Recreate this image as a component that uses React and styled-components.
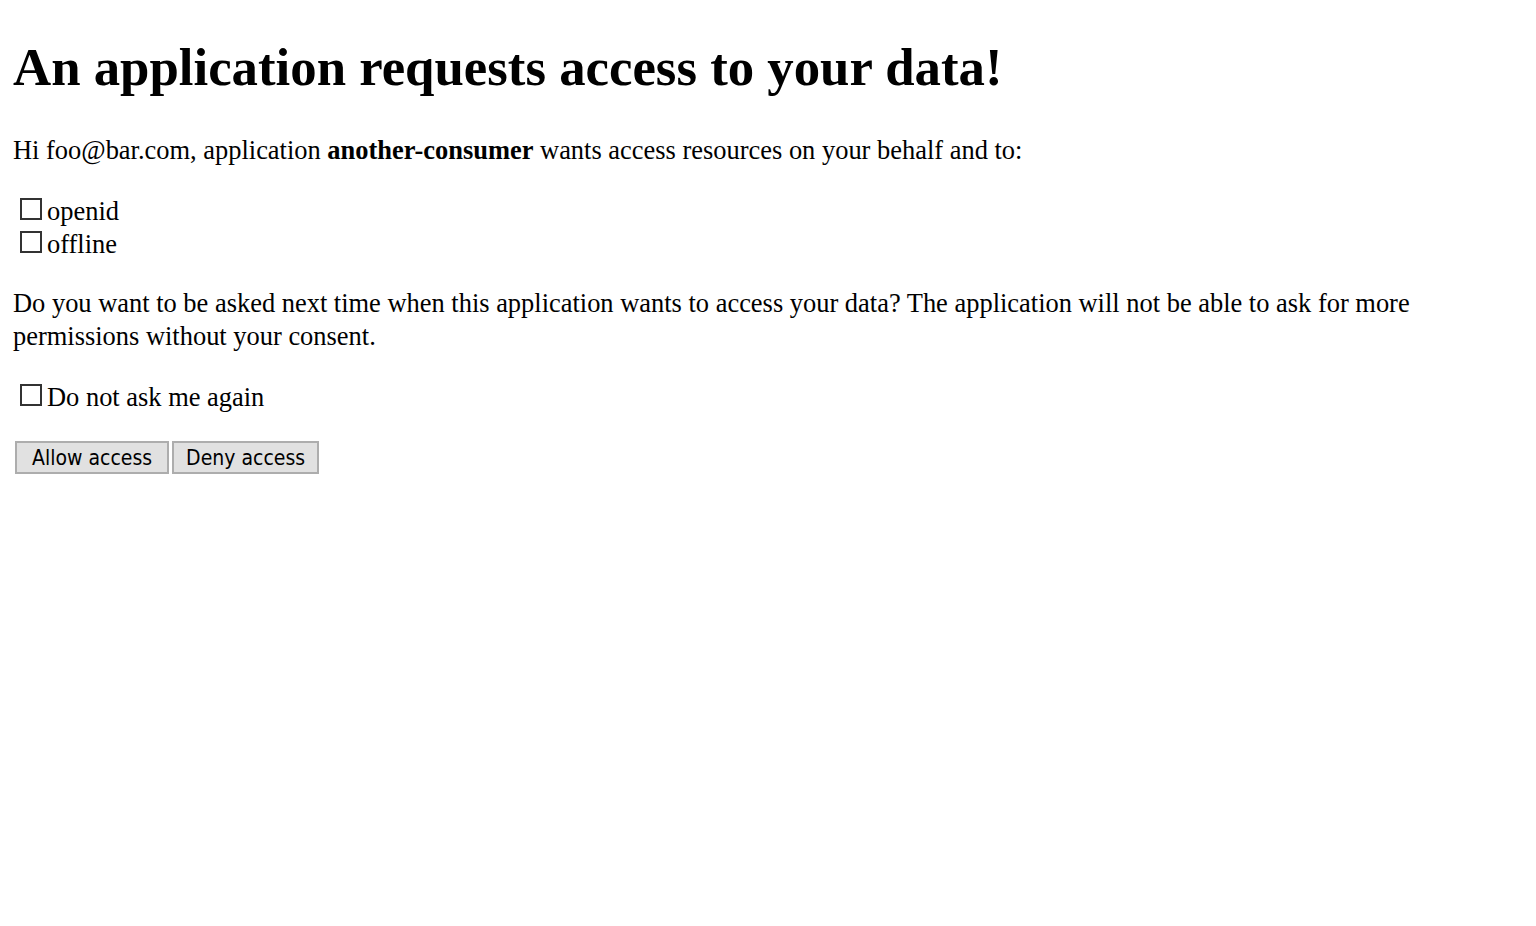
import React, { useState } from 'react';
import styled, { createGlobalStyle } from 'styled-components';

const GlobalStyle = createGlobalStyle`
  body {
    margin: 0;
    background: #fff;
    color: #000;
    font-family: "Liberation Serif", "Times New Roman", serif;
  }
`;

// Page wrapper
const Page = styled.div`
  padding: 0 13px;
`;

const Title = styled.h1`
  font-size: 52.8px;
  line-height: 63px;
  font-weight: bold;
  margin: 36px 0 35px;
`;

const Text = styled.p`
  font-size: 26.45px;
  line-height: 33px;
  margin: ${({ spacing }) => spacing || '0'};
`;

// Scope checkboxes
const ScopeList = styled.div`
  display: flex;
  flex-direction: column;
  margin: ${({ spacing }) => spacing || '0'};
`;

const CheckRow = styled.label`
  display: flex;
  align-items: baseline;
  font-size: 26.45px;
  line-height: 33px;
`;

const Box = styled.input`
  appearance: none;
  -webkit-appearance: none;
  box-sizing: border-box;
  width: 22px;
  height: 22px;
  margin: 0 5px 0 7px;
  border: 2px solid #333;
  background: #fff;
  border-radius: 0;
  cursor: pointer;

  &:checked {
    background: #fff
      url("data:image/svg+xml,%3Csvg xmlns='http://www.w3.org/2000/svg' viewBox='0 0 16 16'%3E%3Cpath d='M3 8l3 3 7-7' fill='none' stroke='%23000' stroke-width='2'/%3E%3C/svg%3E")
      center / 16px no-repeat;
  }
`;

// Action buttons
const Actions = styled.div`
  display: flex;
  gap: 3px;
  padding-left: 2px;
`;

const Button = styled.button`
  box-sizing: border-box;
  height: 33px;
  padding: 0 ${({ pad }) => pad || 15}px;
  border: 2px solid #adadad;
  background: #e1e1e1;
  color: #000;
  font-family: "DejaVu Sans Condensed", "DejaVu Sans", sans-serif;
  font-stretch: condensed;
  font-size: 21px;
  border-radius: 0;
  cursor: pointer;

  &:hover {
    background: #e5f1fb;
    border-color: #0078d7;
  }
`;

const scopes = ['openid', 'offline'];

const App = () => {
  const [granted, setGranted] = useState({});
  const [remember, setRemember] = useState(false);

  const toggle = (scope) => setGranted((g) => ({ ...g, [scope]: !g[scope] }));

  return (
    <Page>
      <GlobalStyle />
      <Title>An application requests access to your data!</Title>

      <Text spacing="0 0 28px">
        Hi foo@bar.com, application <b>another-consumer</b> wants access resources on your behalf and to:
      </Text>

      <ScopeList spacing="0 0 26px">
        {scopes.map((scope) => (
          <CheckRow key={scope}>
            <Box type="checkbox" checked={!!granted[scope]} onChange={() => toggle(scope)} />
            {scope}
          </CheckRow>
        ))}
      </ScopeList>

      <Text>
        Do you want to be asked next time when this application wants to access your data? The application will not be able to ask for more permissions without your consent.
      </Text>

      <ScopeList spacing="28px 0 27px">
        <CheckRow>
          <Box type="checkbox" checked={remember} onChange={() => setRemember(!remember)} />
          Do not ask me again
        </CheckRow>
      </ScopeList>

      <Actions>
        <Button pad={15}>Allow access</Button>
        <Button pad={12}>Deny access</Button>
      </Actions>
    </Page>
  );
};

export default App;
